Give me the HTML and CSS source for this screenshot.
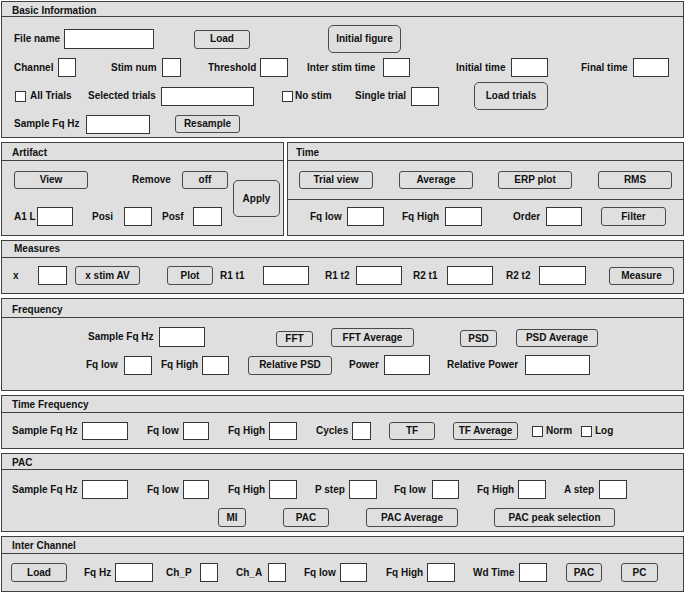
FILE: index.html
```html
<!DOCTYPE html>
<html>
<head>
<meta charset="utf-8">
<link rel="stylesheet" href="styles.css">
</head>
<body>
<div class="app">

  <section class="panel p-basic">
    <div class="title t15 tp3">Basic Information</div>
    <div class="body pt8 stack g4">
      <div class="row h28 r-b1">
        <span class="lbl">File name</span>
        <span class="in w90 h20"></span>
        <span class="btn w56 h19">Load</span>
        <span class="btn big w73 h28">Initial figure</span>
      </div>
      <div class="row h21 r-b2">
        <span class="lbl">Channel</span>
        <span class="in w18 h19"></span>
        <span class="lbl">Stim num</span>
        <span class="in w19 h19"></span>
        <span class="lbl">Threshold</span>
        <span class="in w28 h19"></span>
        <span class="lbl">Inter stim time</span>
        <span class="in w27 h19"></span>
        <span class="lbl">Initial time</span>
        <span class="in w37 h19"></span>
        <span class="lbl">Final time</span>
        <span class="in w36 h19"></span>
      </div>
      <div class="row h28 r-b3">
        <span class="chk"></span>
        <span class="lbl">All Trials</span>
        <span class="lbl">Selected trials</span>
        <span class="in w93 h19"></span>
        <span class="chk"></span>
        <span class="lbl">No stim</span>
        <span class="lbl">Single trial</span>
        <span class="in w28 h19"></span>
        <span class="btn big w74 h28">Load trials</span>
      </div>
      <div class="row h20 r-b4">
        <span class="lbl">Sample Fq Hz</span>
        <span class="in w64 h19"></span>
        <span class="btn w65 h18">Resample</span>
      </div>
    </div>
  </section>

  <div class="pair">
    <section class="panel p-art">
      <div class="title t18 tp2">Artifact</div>
      <div class="body pt10 pl12">
        <div class="art-main">
          <div class="art-left stack g18">
            <div class="row h18 r-a1">
              <span class="btn w74 h18">View</span>
              <span class="lbl">Remove</span>
              <span class="btn w46 h18">off</span>
            </div>
            <div class="row h19 r-a2">
              <span class="lbl">A1 L</span>
              <span class="in w36 h19"></span>
              <span class="lbl">Posi</span>
              <span class="in w28 h19"></span>
              <span class="lbl">Posf</span>
              <span class="in w29 h19"></span>
            </div>
          </div>
          <span class="btn big apply w47 h37">Apply</span>
        </div>
      </div>
    </section>

    <section class="panel p-time">
      <div class="title t18 tp2 tl8">Time</div>
      <div class="time-top">
        <div class="row h18 r-t1">
          <span class="btn w74 h18">Trial view</span>
          <span class="btn w74 h18">Average</span>
          <span class="btn w74 h18">ERP plot</span>
          <span class="btn w74 h18">RMS</span>
        </div>
      </div>
      <div class="body pt7">
        <div class="row h19 r-t2">
          <span class="lbl">Fq low</span>
          <span class="in w37 h19"></span>
          <span class="lbl">Fq High</span>
          <span class="in w37 h19"></span>
          <span class="lbl">Order</span>
          <span class="in w36 h19"></span>
          <span class="btn w65 h19">Filter</span>
        </div>
      </div>
    </section>
  </div>

  <section class="panel p-meas">
    <div class="title t17 tl12">Measures</div>
    <div class="body pt8">
      <div class="row h19 r-m">
        <span class="lbl">x</span>
        <span class="in w29 h19"></span>
        <span class="btn w65 h19">x stim AV</span>
        <span class="btn w46 h19">Plot</span>
        <span class="lbl">R1 t1</span>
        <span class="in w46 h19"></span>
        <span class="lbl">R1 t2</span>
        <span class="in w46 h19"></span>
        <span class="lbl">R2 t1</span>
        <span class="in w46 h19"></span>
        <span class="lbl">R2 t2</span>
        <span class="in w47 h19"></span>
        <span class="btn w65 h18">Measure</span>
      </div>
    </div>
  </section>

  <section class="panel p-freq">
    <div class="title t19 tp3">Frequency</div>
    <div class="body pt9 stack g8">
      <div class="row h20 r-f1">
        <span class="lbl">Sample Fq Hz</span>
        <span class="in w46 h20"></span>
        <span class="btn w37 h16">FFT</span>
        <span class="btn w83 h19">FFT Average</span>
        <span class="btn w37 h17">PSD</span>
        <span class="btn w82 h18">PSD Average</span>
      </div>
      <div class="row h20 r-f2">
        <span class="lbl">Fq low</span>
        <span class="in w28 h19"></span>
        <span class="lbl">Fq High</span>
        <span class="in w27 h19"></span>
        <span class="btn w84 h19">Relative PSD</span>
        <span class="lbl">Power</span>
        <span class="in w46 h20"></span>
        <span class="lbl">Relative Power</span>
        <span class="in w65 h20"></span>
      </div>
    </div>
  </section>

  <section class="panel p-tf">
    <div class="title t17 tp1">Time Frequency</div>
    <div class="body pt9">
      <div class="row h18 r-tf">
        <span class="lbl">Sample Fq Hz</span>
        <span class="in w46 h18"></span>
        <span class="lbl">Fq low</span>
        <span class="in w26 h18"></span>
        <span class="lbl">Fq High</span>
        <span class="in w28 h18"></span>
        <span class="lbl">Cycles</span>
        <span class="in w19 h18"></span>
        <span class="btn w46 h18">TF</span>
        <span class="btn w65 h18">TF Average</span>
        <span class="chk"></span>
        <span class="lbl">Norm</span>
        <span class="chk"></span>
        <span class="lbl">Log</span>
      </div>
    </div>
  </section>

  <section class="panel p-pac">
    <div class="title t16 tp3">PAC</div>
    <div class="body pt10 stack g9">
      <div class="row h19 r-p1">
        <span class="lbl">Sample Fq Hz</span>
        <span class="in w46 h19"></span>
        <span class="lbl">Fq low</span>
        <span class="in w26 h19"></span>
        <span class="lbl">Fq High</span>
        <span class="in w28 h19"></span>
        <span class="lbl">P step</span>
        <span class="in w28 h19"></span>
        <span class="lbl">Fq low</span>
        <span class="in w27 h19"></span>
        <span class="lbl">Fq High</span>
        <span class="in w28 h19"></span>
        <span class="lbl">A step</span>
        <span class="in w28 h19"></span>
      </div>
      <div class="row h19 r-p2">
        <span class="btn w28 h19">MI</span>
        <span class="btn w46 h19">PAC</span>
        <span class="btn w92 h19">PAC Average</span>
        <span class="btn w121 h19">PAC peak selection</span>
      </div>
    </div>
  </section>

  <section class="panel p-inter">
    <div class="title t17 tp2">Inter Channel</div>
    <div class="body pt9">
      <div class="row h19 r-ic">
        <span class="btn w56 h19">Load</span>
        <span class="lbl">Fq Hz</span>
        <span class="in w38 h19"></span>
        <span class="lbl">Ch_P</span>
        <span class="in w18 h19"></span>
        <span class="lbl">Ch_A</span>
        <span class="in w18 h19"></span>
        <span class="lbl">Fq low</span>
        <span class="in w27 h19"></span>
        <span class="lbl">Fq High</span>
        <span class="in w28 h19"></span>
        <span class="lbl">Wd Time</span>
        <span class="in w28 h19"></span>
        <span class="btn w36 h19">PAC</span>
        <span class="btn w37 h19">PC</span>
      </div>
    </div>
  </section>

</div>
</body>
</html>
```

FILE: styles.css
```css
* { box-sizing: border-box; }

html, body {
  margin: 0;
  padding: 0;
  background: #ffffff;
}

body {
  font-family: "Liberation Sans", Arial, sans-serif;
  font-size: 10px;
  font-weight: bold;
  color: #111111;
}

.app {
  width: 685px;
  padding: 1px;
  display: flex;
  flex-direction: column;
  gap: 4px;
}

.panel {
  background: #dfdfdf;
  border: 1px solid #404040;
  display: flex;
  flex-direction: column;
}

.p-basic { height: 137px; }
.pair { display: flex; gap: 3px; height: 94px; }
.p-art { width: 283px; }
.p-time { flex: 1; }
.p-meas { height: 54px; }
.p-freq { height: 93px; }
.p-tf { height: 54px; }
.p-pac { height: 79px; }
.p-inter { height: 56px; }

.title {
  border-bottom: 1px solid #404040;
  padding-left: 10px;
  display: flex;
  align-items: center;
  flex: none;
  line-height: 1;
}
.t15 { height: 15px; }
.t16 { height: 16px; }
.t17 { height: 17px; }
.t18 { height: 18px; }
.t19 { height: 19px; }
.tp1 { padding-top: 1px; }
.tp2 { padding-top: 2px; }
.tp3 { padding-top: 3px; }
.tl8 { padding-left: 8px; }
.tl12 { padding-left: 12px; }

.body { flex: 1; }
.pt7 { padding-top: 7px; }
.pt8 { padding-top: 8px; }
.pt9 { padding-top: 9px; }
.pt10 { padding-top: 10px; }
.pl12 { padding-left: 12px; }

.stack { display: flex; flex-direction: column; }
.g4 { gap: 4px; }
.g8 { gap: 8px; }
.g9 { gap: 9px; }
.g18 { gap: 18px; }

.row {
  display: grid;
  align-items: center;
}
.h18 { height: 18px; }
.h19 { height: 19px; }
.h20 { height: 20px; }
.h21 { height: 21px; }
.h28 { height: 28px; }

.lbl { white-space: nowrap; line-height: 1; }

.in {
  display: block;
  background: #ffffff;
  border: 1px solid #353535;
}

.btn {
  display: flex;
  align-items: center;
  justify-content: center;
  white-space: nowrap;
  background: #dfdfdf;
  border: 1px solid #4a4a4a;
  border-radius: 3px;
  line-height: 1;
}
.btn.big { border-radius: 5px; }

.chk {
  display: block;
  width: 11px;
  height: 11px;
  background: #ffffff;
  border: 1px solid #353535;
}

/* element sizes */
.w18 { width: 18px; } .w19 { width: 19px; } .w26 { width: 26px; }
.w27 { width: 27px; } .w28 { width: 28px; } .w29 { width: 29px; }
.w36 { width: 36px; } .w37 { width: 37px; } .w38 { width: 38px; }
.w46 { width: 46px; } .w47 { width: 47px; } .w56 { width: 56px; }
.w64 { width: 64px; } .w65 { width: 65px; } .w73 { width: 73px; }
.w74 { width: 74px; } .w82 { width: 82px; } .w83 { width: 83px; }
.w84 { width: 84px; } .w90 { width: 90px; } .w92 { width: 92px; }
.w93 { width: 93px; } .w121 { width: 121px; }
.in.h18, .btn.h18 { height: 18px; }
.in.h19, .btn.h19 { height: 19px; }
.in.h20 { height: 20px; }
.btn.h16 { height: 16px; }
.btn.h17 { height: 17px; }
.btn.h28, .in.h28 { height: 28px; }
.btn.h37 { height: 37px; }

/* Basic Information rows */
.r-b1 { padding-left: 12px; grid-template-columns: 50px 130px 134px auto; }
.r-b2 { padding-left: 12px; grid-template-columns: 44px 53px 51px 46px 52px 47px 76px 73px 55px 70px 52px auto; }
.r-b3 { padding-left: 13px; grid-template-columns: 15px 58px 73px 121px 13px 60px 56px 63px auto; }
.r-b4 { padding-left: 12px; grid-template-columns: 72px 89px auto; }

/* Artifact */
.art-main { display: flex; align-items: center; }
.art-left { width: 214px; }
.apply { margin-left: 5px; }
.r-a1 { grid-template-columns: 118px 50px auto; }
.r-a2 { grid-template-columns: 23px 55px 32px 38px 31px auto; }

/* Time */
.time-top {
  height: 39px;
  border-bottom: 1px solid #404040;
  display: flex;
  align-items: center;
  flex: none;
}
.r-t1 { padding-left: 11px; grid-template-columns: 100px 99px 100px auto; }
.r-t2 { padding-left: 22px; grid-template-columns: 37px 55px 43px 68px 33px 55px auto; }

/* Measures */
.r-m { padding-left: 11px; grid-template-columns: 25px 37px 92px 53px 43px 62px 31px 57px 34px 59px 33px 70px auto; }

/* Frequency */
.r-f1 { padding-left: 86px; grid-template-columns: 71px 117px 55px 129px 56px auto; align-items: end; }
.r-f1 .lbl { align-self: center; }
.r-f2 { padding-left: 84px; grid-template-columns: 38px 37px 41px 46px 101px 35px 63px 78px auto; }

/* Time Frequency */
.r-tf { padding-left: 10px; grid-template-columns: 70px 65px 36px 45px 41px 47px 36px 37px 64px 79px 14px 35px 14px auto; }

/* PAC */
.r-p1 { padding-left: 10px; grid-template-columns: 70px 65px 36px 45px 41px 46px 34px 45px 38px 45px 41px 46px 35px auto; }
.r-p2 { padding-left: 216px; grid-template-columns: 65px 83px 128px auto; }

/* Inter Channel */
.r-ic { padding-left: 9px; grid-template-columns: 73px 31px 51px 34px 36px 32px 36px 36px 46px 41px 46px 46px 47px 55px auto; }
```
